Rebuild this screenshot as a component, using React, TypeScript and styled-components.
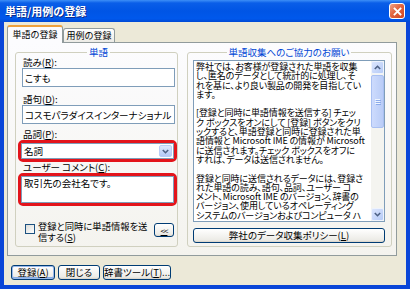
import React from "react";
import styled, { createGlobalStyle } from "styled-components";

const GlobalStyle = createGlobalStyle`
  html, body {
    margin: 0;
    padding: 0;
    background: #ece9d8;
  }
  body {
    font-family: "Noto Sans CJK JP", "Noto Sans", sans-serif;
    font-size: 9px;
    color: #000;
    font-feature-settings: "palt";
  }
  * {
    box-sizing: border-box;
  }
`;

const noticeLines = [
  "弊社では、お客様が登録された単語を収集",
  "し、匿名のデータとして統計的に処理し、そ",
  "れを基に、より良い製品の開発を目指してい",
  "ます。",
  "",
  "[登録と同時に単語情報を送信する] チェッ",
  "ク ボックスをオンにして [登録] ボタンをクリ",
  "ックすると、単語登録と同時に登録された単",
  "語情報と Microsoft IME の情報が Microsoft",
  "に送信されます。チェック ボックスをオフに",
  "すれば、データは送信されません。",
  "",
  "登録と同時に送信されるデータには、登録さ",
  "れた単語の読み、語句、品詞、ユーザー コ",
  "メント、Microsoft IME のバージョン、辞書の",
  "バージョン、使用しているオペレーティング",
  "システムのバージョンおよびコンピュータ ハ",
];

export default function App() {
  return (
    <>
      <GlobalStyle />
      <Window>
        <TitleBar>
          <Title>単語/用例の登録</Title>
          <CloseButton>
            <svg width="9" height="9" viewBox="0 0 9 9">
              <path d="M1.5 1.5 L7.5 7.5 M7.5 1.5 L1.5 7.5" stroke="#fff" strokeWidth="1.8" strokeLinecap="square" />
            </svg>
          </CloseButton>
        </TitleBar>

        <Body>
          <TabStrip>
            <Tab $active>単語の登録</Tab>
            <Tab>用例の登録</Tab>
          </TabStrip>

          <Panel>
            <Group $width={163} $pad="0 2px 0 6px">
              <Legend>単語</Legend>

              <Label>
                読み(<u>R</u>):
              </Label>
              <TextInput readOnly value="こすも" />

              <Label>
                語句(<u>D</u>):
              </Label>
              <TextInput readOnly value="コスモパラダイスインターナショナル" $gap={5} />

              <Label>
                品詞(<u>P</u>):
              </Label>
              <Highlight>
                <Combo>
                  <ComboText>名詞</ComboText>
                  <ComboArrow>
                    <svg width="7" height="5" viewBox="0 0 7 5">
                      <path d="M0.8 1 L3.5 3.7 L6.2 1" stroke="#4d6185" strokeWidth="1.6" fill="none" />
                    </svg>
                  </ComboArrow>
                </Combo>
              </Highlight>

              <Label>
                ユーザー コメント(<u>C</u>):
              </Label>
              <Highlight>
                <Comment>取引先の会社名です。</Comment>
              </Highlight>

              <CheckRow>
                <CheckBox />
                <CheckText>
                  登録と同時に単語情報を送
                  <br />
                  信する(<u>S</u>)
                </CheckText>
                <SmallButton>
                  <u>&lt;&lt;</u>
                </SmallButton>
              </CheckRow>
            </Group>

            <Group $width={205} $pad="0 6px 0 5px">
              <Legend>単語収集へのご協力のお願い</Legend>
              <Pane>
                <PaneText>
                  {noticeLines.map((line, i) => (
                    <Line key={i}>{line || "\u00a0"}</Line>
                  ))}
                </PaneText>
                <ScrollBar>
                  <ScrollButton>
                    <svg width="7" height="5" viewBox="0 0 7 5">
                      <path d="M0.8 4 L3.5 1.3 L6.2 4" stroke="#4d6185" strokeWidth="1.6" fill="none" />
                    </svg>
                  </ScrollButton>
                  <Thumb>
                    <Grip />
                    <Grip />
                    <Grip />
                  </Thumb>
                  <Track />
                  <ScrollButton>
                    <svg width="7" height="5" viewBox="0 0 7 5">
                      <path d="M0.8 1 L3.5 3.7 L6.2 1" stroke="#4d6185" strokeWidth="1.6" fill="none" />
                    </svg>
                  </ScrollButton>
                </ScrollBar>
              </Pane>
              <PolicyButton>
                弊社のデータ収集ポリシー(<u>L</u>)
              </PolicyButton>
            </Group>
          </Panel>

          <ButtonRow>
            <Button $width={44} $default>
              登録(<u>A</u>)
            </Button>
            <Button $width={42}>閉じる</Button>
            <Button $width={68}>
              辞書ツール(<u>T</u>)...
            </Button>
          </ButtonRow>
        </Body>
      </Window>
    </>
  );
}

const Window = styled.div`
  width: 410px;
  height: 289px;
  display: flex;
  flex-direction: column;
  overflow: hidden;
`;

const TitleBar = styled.div`
  flex: none;
  height: 22px;
  display: flex;
  align-items: center;
  justify-content: space-between;
  padding: 0 5px 0 5px;
  background: linear-gradient(
    180deg,
    #3d8ff7 0,
    #0a5ee8 3px,
    #0055e5 50%,
    #0058ec 85%,
    #0049d4 100%
  );
`;

const Title = styled.div`
  color: #fff;
  font-size: 11px;
  font-weight: bold;
  line-height: 12px;
  text-shadow: 1px 1px 0 #0a2a8c;
  font-feature-settings: normal;
`;

const CloseButton = styled.div`
  width: 16px;
  height: 16px;
  display: flex;
  align-items: center;
  justify-content: center;
  border: 1px solid #fff;
  border-radius: 3px;
  background: linear-gradient(135deg, #f0a288 0%, #e2653f 45%, #cc4422 100%);
`;

const Body = styled.div`
  flex: 1;
  display: flex;
  flex-direction: column;
  padding: 3px 0 0 3px;
  background: #ece9d8;
  border: 4px solid #0a46d8;
  border-top: none;
`;

const TabStrip = styled.div`
  height: 18px;
  margin-bottom: -1px;
  display: flex;
  align-items: flex-start;
  position: relative;
  z-index: 1;
`;

const Tab = styled.div<{ $active?: boolean }>`
  height: ${(p) => (p.$active ? 18 : 14)}px;
  margin-top: ${(p) => (p.$active ? 0 : 3)}px;
  width: ${(p) => (p.$active ? 56 : 52)}px;
  display: flex;
  align-items: center;
  justify-content: center;
  font-size: 9px;
  line-height: 10px;
  font-feature-settings: normal;
  padding-bottom: ${(p) => (p.$active ? 1 : 0)}px;
  border: 1px solid #919b9c;
  border-bottom: none;
  border-top: ${(p) => (p.$active ? "2px solid #eea13c" : "1px solid #919b9c")};
  border-radius: 3px 3px 0 0;
  background: ${(p) =>
    p.$active ? "#fcfcfe" : "linear-gradient(180deg, #ffffff, #ecebe6)"};
`;

const Panel = styled.div`
  width: 390px;
  height: 214px;
  display: flex;
  gap: 9px;
  padding: 4px 4px 8px 7px;
  border: 1px solid #919b9c;
  background: linear-gradient(180deg, #fcfcfe, #f4f3ee);
`;

const Group = styled.fieldset<{ $width: number; $pad: string }>`
  width: ${(p) => p.$width}px;
  margin: 0;
  padding: ${(p) => p.$pad};
  min-width: 0;
  display: flex;
  flex-direction: column;
  border: 1px solid #d0d0bf;
  border-radius: 3px;
`;

const Legend = styled.legend`
  margin: 0 auto;
  padding: 0 2px;
  color: #0046d5;
  font-size: 9.5px;
  line-height: 10px;
`;

const Label = styled.div`
  height: 11px;
  line-height: 11px;
  font-size: 9.5px;
  padding-left: 1px;
  white-space: nowrap;
`;

const TextInput = styled.input<{ $gap?: number }>`
  display: block;
  width: 100%;
  height: 19px;
  margin: 0 0 ${(p) => p.$gap ?? 7}px;
  padding: 0 2px;
  font-family: inherit;
  font-size: 9.5px;
  font-feature-settings: "palt";
  color: #000;
  border: 1px solid #7f9db9;
  background: #fff;
  outline: none;
`;

const Highlight = styled.div`
  margin: 0 -2px 0 -4px;
  border: 3px solid #e3141b;
  border-radius: 5px;
`;

const Combo = styled.div`
  height: 16px;
  display: flex;
  align-items: center;
  border: 1px solid #7f9db9;
  background: #fff;
`;

const ComboText = styled.div`
  flex: 1;
  padding-left: 2px;
  line-height: 12px;
  font-size: 9.5px;
`;

const ComboArrow = styled.div`
  width: 13px;
  height: 12px;
  margin-right: 1px;
  display: flex;
  align-items: center;
  justify-content: center;
  border: 1px solid #b9cdf7;
  border-radius: 2px;
  background: linear-gradient(180deg, #dde7fe, #b4c9f6);
`;

const Comment = styled.div`
  height: 27px;
  padding: 1px 2px;
  line-height: 11px;
  font-size: 9.5px;
  border: 1px solid #7f9db9;
  background: #fff;
`;

const CheckRow = styled.div`
  margin-top: 15px;
  display: flex;
  align-items: flex-start;
`;

const CheckBox = styled.div`
  flex: none;
  width: 10px;
  height: 10px;
  margin: 3px 3px 0 3px;
  border: 1px solid #1c5180;
  background: linear-gradient(135deg, #dcdcd7, #ffffff);
`;

const CheckText = styled.div`
  font-size: 9.3px;
  line-height: 10.5px;
  white-space: nowrap;
`;

const SmallButton = styled.div`
  width: 20px;
  height: 14px;
  margin: 2px 1px 0 auto;
  display: flex;
  align-items: center;
  justify-content: center;
  font-size: 8px;
  letter-spacing: -1px;
  border: 1px solid #003c74;
  border-radius: 3px;
  background: linear-gradient(180deg, #fff, #ecebe6 86%, #d6d0c5);
`;

const Pane = styled.div`
  margin-top: 3px;
  height: 162px;
  display: flex;
  border: 1px solid #7f9db9;
  background: #fff;
`;

const PaneText = styled.div`
  flex: 1;
  overflow: hidden;
  padding: 1px 0 0 2px;
  font-size: 9px;
  line-height: 9.3px;
  letter-spacing: -0.1px;
  white-space: nowrap;
`;

const Line = styled.div`
  height: 9.3px;
`;

const ScrollBar = styled.div`
  width: 13px;
  display: flex;
  flex-direction: column;
  background: #f4f4f0;
`;

const ScrollButton = styled.div`
  height: 13px;
  display: flex;
  align-items: center;
  justify-content: center;
  border: 1px solid #eef3fd;
  border-radius: 2px;
  background: linear-gradient(135deg, #dbe5fd, #b6cbf7);
`;

const Thumb = styled.div`
  height: 53px;
  margin-top: 1px;
  display: flex;
  flex-direction: column;
  align-items: center;
  justify-content: center;
  gap: 1px;
  border: 1px solid #a9c0f2;
  border-radius: 2px;
  background: linear-gradient(90deg, #cddbfd, #b9ccf7);
`;

const Grip = styled.div`
  width: 5px;
  height: 1px;
  background: #eef4fe;
  box-shadow: 1px 1px 0 #8cabeb;
`;

const Track = styled.div`
  flex: 1;
`;

const Button = styled.div<{ $width: number; $default?: boolean }>`
  width: ${(p) => p.$width}px;
  height: 15px;
  display: flex;
  align-items: center;
  justify-content: center;
  font-size: 9.5px;
  line-height: 11px;
  white-space: nowrap;
  border: 1px solid #003c74;
  border-radius: 3px;
  background: linear-gradient(180deg, #fff, #ecebe6 86%, #d6d0c5);
  box-shadow: ${(p) =>
    p.$default ? "inset 0 0 0 1px #98b8ea, inset 0 -1px 0 1px #89ade4" : "none"};
`;

const PolicyButton = styled(Button).attrs({ $width: 0 })`
  width: 100%;
  margin-top: 6px;
`;

const ButtonRow = styled.div`
  margin-top: 9px;
  padding-left: 4px;
  display: flex;
  gap: 3px;
`;
